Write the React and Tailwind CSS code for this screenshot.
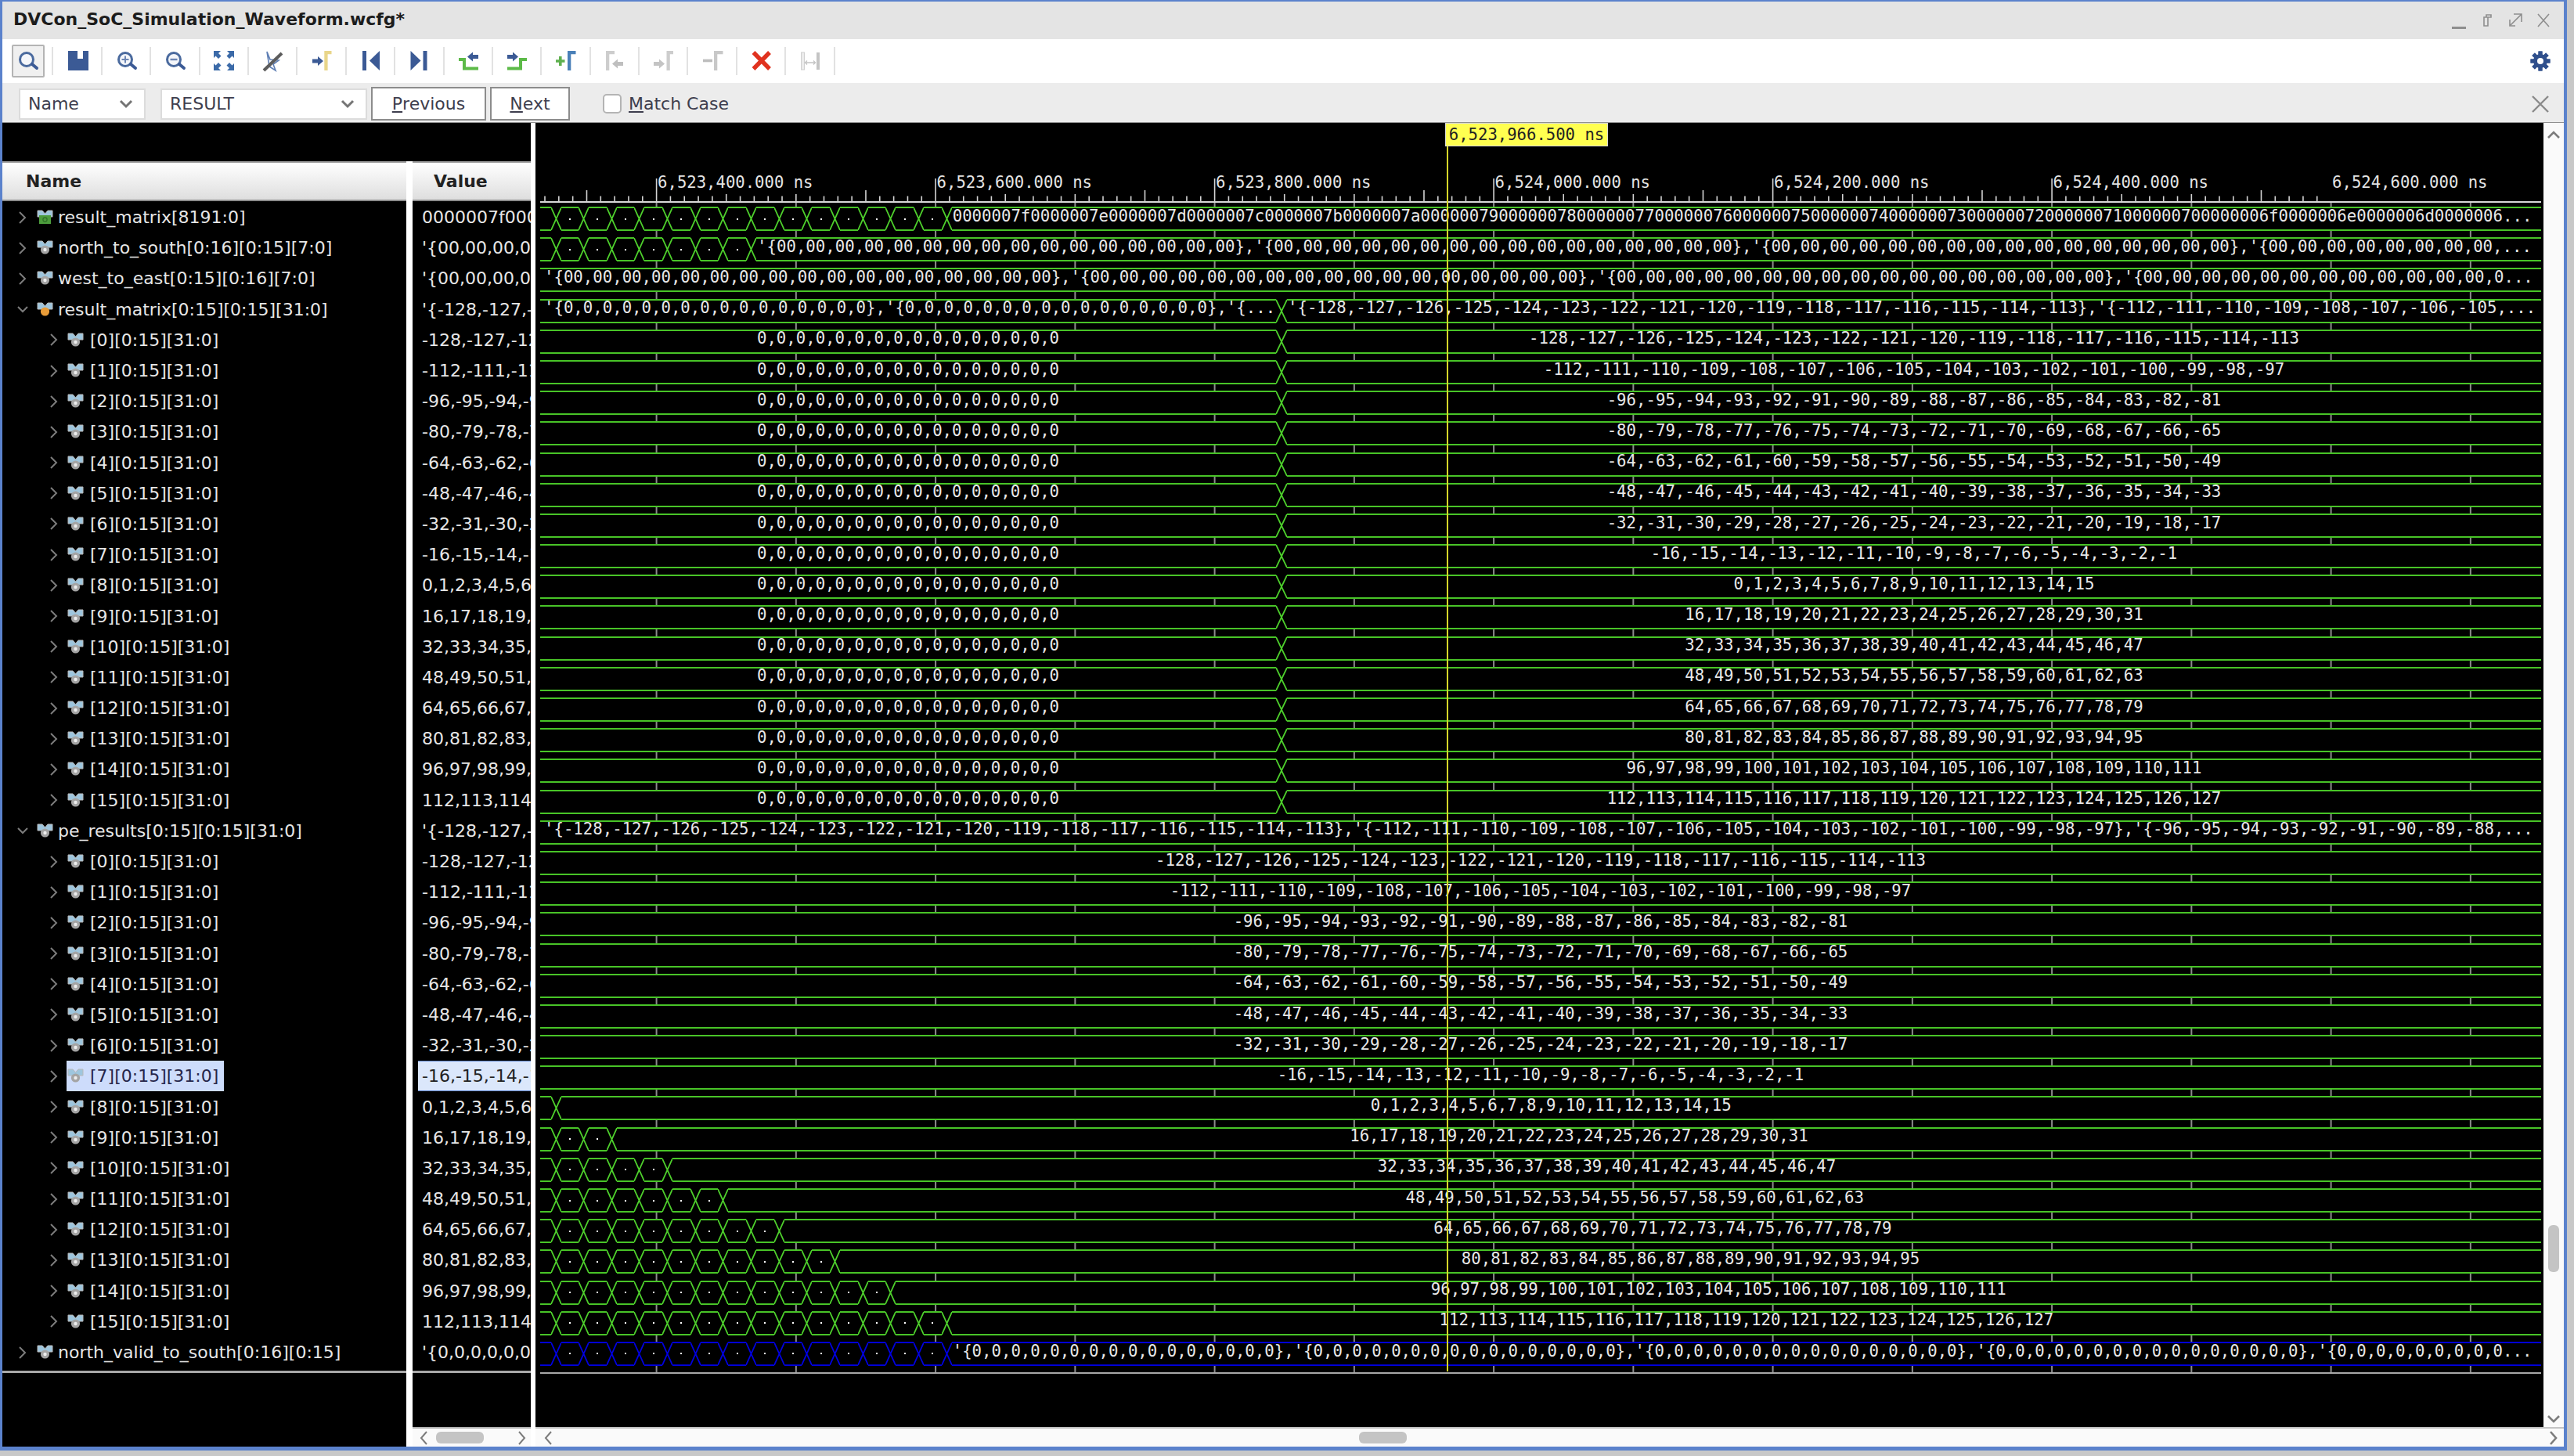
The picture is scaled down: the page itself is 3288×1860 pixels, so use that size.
const range = (from, to) => {
  const out = [];
  for (let i = from; i <= to; i++) out.push(i);
  return out;
};

const vals = (i) => range(-128 + 16 * i, -113 + 16 * i).join(",");
const zeros = range(1, 16).map(() => "0").join(",");
const hex16 = range(1, 16).map(() => "00").join(",");
const hex17 = range(1, 17).map(() => "00").join(",");

const hexTail = range(0, 18).map((n) => "000000" + (0x7f - n).toString(16)).join("") + "0000006...";
const northText = `'{${hex16}},'{${hex16}},'{${hex16}},'{00,00,00,00,00,00,00,00,...`;
const westText = `'{${hex17}},'{${hex17}},'{${hex17}},'{00,00,00,00,00,00,00,00,00,00,00,00,0...`;
const matLeft = `'{${zeros}},'{${zeros}},'{...`;
const matRight = `'{${vals(0)}},'{${vals(1)}}`.slice(0, 125) + "...";
const peText = `'{${vals(0)}},'{${vals(1)}},'{-96,-95,-94,-93,-92,-91,-90,-89,-88,...`;
const validText = `'{${zeros}},'{${zeros}},'{${zeros}},'{${zeros}},'{0,0,0,0,0,0,0,0,0...`;

const treeRows = [
  { name: "result_matrix[8191:0]", value: "0000007f0000007e", icon: "green" },
  { name: "north_to_south[0:16][0:15][7:0]", value: `'{00,00,00,00,00` },
  { name: "west_to_east[0:15][0:16][7:0]", value: `'{00,00,00,00,00` },
  { name: "result_matrix[0:15][0:15][31:0]", value: `'{-128,-127,-126`, icon: "orange", open: true },
  ...range(0, 15).map((i) => ({ name: `[${i}][0:15][31:0]`, value: vals(i), child: true })),
  { name: "pe_results[0:15][0:15][31:0]", value: `'{-128,-127,-126`, open: true },
  ...range(0, 15).map((i) => ({ name: `[${i}][0:15][31:0]`, value: vals(i), child: true, selected: i === 7 })),
  { name: "north_valid_to_south[0:16][0:15]", value: `'{0,0,0,0,0,0,0,0` },
];

const waveRows = [
  { n: 15, text: hexTail, pad: "pl-[1px]" },
  { n: 8, text: northText, pad: "pl-[1px]" },
  { n: 0, text: westText, pad: "pl-[5px]" },
  { split: true, left: matLeft, right: matRight },
  ...range(0, 15).map((i) => ({ split: true, left: zeros, right: vals(i), center: true })),
  { n: 0, text: peText, pad: "pl-[5px]" },
  ...range(0, 7).map((i) => ({ n: 0, text: vals(i), center: true })),
  ...range(8, 15).map((i) => ({ n: (i - 8) * 2 + 1, text: vals(i), center: true })),
  { n: 15, text: validText, blue: true, pad: "pl-[1px]" },
];

const Chevron = ({ open, className = "" }) => (
  <svg width="14" height="16" viewBox="0 0 14 16" className={className}>
    <path
      d={open ? "M1 5 L7 11 L13 5" : "M3 1 L10 8 L3 15"}
      fill="none"
      stroke="#7c7c7c"
      strokeWidth="2"
    />
  </svg>
);

const SignalIcon = ({ kind }) => (
  <svg width="21" height="19" viewBox="0 0 21 19" className="shrink-0">
    <path d="M1 1 L7 1 L10.5 5 L14 1 L20 1 L20 9 L15 9 L10.5 13 L6 9 L1 9 Z" fill="#9ec6de" stroke="#b9b9b9" />
    {kind === "green" ? (
      <>
        <rect x="3" y="7" width="15" height="11" fill="#4c9c3c" />
        <circle cx="10.5" cy="12.5" r="2.6" fill="none" stroke="#2f6e28" strokeWidth="1.2" />
      </>
    ) : kind === "orange" ? (
      <circle cx="10.5" cy="12" r="5.6" fill="#e89c38" />
    ) : (
      <>
        <circle cx="10.5" cy="12" r="5.6" fill="#a4a4a4" />
        <circle cx="10.5" cy="12" r="2.2" fill="#ececec" />
      </>
    )}
  </svg>
);

const TreeRow = ({ row }) => (
  <div className={`h-[39.2px] flex items-center shrink-0 ${row.child ? "pl-[59px]" : "pl-[19px]"}`}>
    <Chevron open={row.open} className="shrink-0" />
    <div
      className={`flex items-center h-[39px] ${row.child ? "ml-[9px] pl-[1px] w-[201px]" : "ml-[11px]"} ${
        row.selected ? "bg-[#cddcfb] text-[#26264a]" : "text-[#e6e6e6]"
      }`}
    >
      <SignalIcon kind={row.icon} />
      <span className={`whitespace-pre text-[22px] ${row.child ? "ml-[8px]" : "ml-[6px]"}`}>{row.name}</span>
    </div>
  </div>
);

const ValueRow = ({ row }) => (
  <div
    className={`h-[39.2px] shrink-0 flex items-center overflow-hidden whitespace-pre text-[22px] ${
      row.selected
        ? "ml-[7px] pl-[5px] bg-[#dbe7fb] text-[#222] border-y border-[#5b82cc]"
        : "pl-[12px] text-[#e6e6e6]"
    }`}
  >
    {row.value}
  </div>
);

const Cross = ({ color, w = 13 }) => (
  <svg width={w} height="31" viewBox={`0 0 ${w} 31`} className="shrink-0 block">
    <rect width={w} height="31" fill="#000" />
    <path d={`M0 1 L${w} 30 M0 30 L${w} 1`} stroke={color} strokeWidth="1.8" fill="none" />
  </svg>
);

const Seg = ({ blue, className = "", children }) => (
  <div
    className={`h-[31px] bg-black border-y-2 flex items-center overflow-hidden whitespace-pre ${
      blue ? "border-[#0000d6]" : "border-[#48c427]"
    } ${className}`}
  >
    {children}
  </div>
);

const WaveText = ({ children }) => (
  <span className="block -mt-[7px] font-['DejaVu_Sans_Mono',monospace] text-[20.7px] leading-none text-[#e8e8e8]">
    {children}
  </span>
);

const WaveRow = ({ row }) => {
  const color = row.blue ? "#0000e0" : "#4ed02c";
  let body;
  if (row.split) {
    body = (
      <>
        <Seg className={`w-[940px] shrink-0 ${row.center ? "justify-center" : "pl-[5px]"}`}>
          <WaveText>{row.left}</WaveText>
        </Seg>
        <Cross color={color} w={14} />
        <Seg className={`flex-1 min-w-0 ${row.center ? "justify-center" : "pl-[1px]"}`}>
          <WaveText>{row.right}</WaveText>
        </Seg>
      </>
    );
  } else {
    const parts = [];
    for (let i = 0; i < row.n; i++) {
      if (i === 0) {
        parts.push(<Seg key="first" blue={row.blue} className="w-[13.5px] shrink-0" />);
      } else {
        parts.push(
          <Seg key={`s${i}`} blue={row.blue} className="w-[22.67px] shrink-0 justify-center">
            <div className="w-[2px] h-[2px] bg-white" />
          </Seg>
        );
      }
      parts.push(<Cross key={`x${i}`} color={color} />);
    }
    body = (
      <>
        {parts}
        <Seg blue={row.blue} className={`flex-1 min-w-0 ${row.center ? "justify-center" : row.pad || ""}`}>
          <WaveText>{row.text}</WaveText>
        </Seg>
      </>
    );
  }
  return <div className="h-[39.2px] shrink-0 flex items-start relative">{body}</div>;
};

const MAJOR = [6523400, 6523600, 6523800, 6524000, 6524200, 6524400, 6524600];
const formatTime = (t) => {
  const s = String(t);
  return `${s[0]},${s.slice(1, 4)},${s.slice(4)}.000 ns`;
};

// ruler svg starts at y=215, x=684
const Ruler = () => {
  const ticks = [];
  for (let k = -8; k <= 119; k++) {
    const x = 154.6 + k * 17.825;
    const idx = ((k % 20) + 20) % 20;
    let top = 35.5;
    if (idx === 0) top = 13;
    else if (idx === 15) top = 28;
    else if (idx === 5 || idx === 10) top = 33;
    ticks.push(<line key={k} x1={x} x2={x} y1={top} y2={43} stroke="#d4d4d4" strokeWidth="1.6" />);
  }
  return (
    <svg width="2565" height="49" className="block shrink-0">
      <rect x="6" y="42" width="2556" height="2" fill="#d8d8d8" />
      {ticks}
      {MAJOR.map((t, i) => (
        <text
          key={t}
          x={154.6 + i * 356.5 + 1.5}
          y="25"
          fill="#e4e4e4"
          className="font-['DejaVu_Sans_Mono',monospace] text-[20.6px]"
        >
          {formatTime(t)}
        </text>
      ))}
    </svg>
  );
};

const GridLines = () => (
  <svg width="2565" height="1666" className="absolute left-0 top-0">
    {range(0, 14).map((k) => {
      const x = 154.6 + k * 178.25;
      return <line key={k} x1={x} x2={x} y1="101" y2="1596" stroke="#8c8c8c" strokeWidth="2" />;
    })}
  </svg>
);

/* ── toolbar icons ── */
const NAVY = "#3b5a95";
const Ico = ({ children }) => (
  <svg width="36" height="36" viewBox="0 0 36 36">
    {children}
  </svg>
);

const Lens = ({ children, cx = 16 }) => (
  <>
    <circle cx={cx} cy="16" r="8.5" fill="#f4f6fa" stroke="#4a6a9e" strokeWidth="3" />
    <path d={`M${cx + 7} 22 L${cx + 13} 27`} stroke={NAVY} strokeWidth="4" strokeLinecap="round" />
    {children}
  </>
);

const arrowR = (x, y, fill) => (
  <path d={`M${x} ${y - 2.5} H${x + 7} V${y - 6} L${x + 14} ${y} L${x + 7} ${y + 6} V${y + 2.5} H${x} Z`} fill={fill} />
);
const arrowL = (x, y, fill) => (
  <path d={`M${x + 14} ${y - 2.5} H${x + 7} V${y - 6} L${x} ${y} L${x + 7} ${y + 6} V${y + 2.5} H${x + 14} Z`} fill={fill} />
);
const gamma = (x, to, fill) => <path d={`M${x} 30 V5 H${to} V9.2 H${x + 4.3} V30 Z`} fill={fill} />;

const toolIcons = [
  <Ico key="search"><Lens /></Ico>,
  <Ico key="save">
    <path d="M6 5 H18 V15 H25 V5 H32 V30 H6 Z" fill={NAVY} />
  </Ico>,
  <Ico key="zin">
    <Lens cx={17}>
      <path d="M12.5 16 H21.5 M17 11.5 V20.5" stroke="#6d86b4" strokeWidth="2" />
    </Lens>
  </Ico>,
  <Ico key="zout">
    <Lens cx={17}>
      <path d="M12.5 16 H21.5" stroke="#6d86b4" strokeWidth="2.4" />
    </Lens>
  </Ico>,
  <Ico key="fit">
    <g fill="#3b6aa8">
      <path d="M5 5 H14 L11 8 L14.5 11.5 L11 15 L7.5 11.5 L5 14 Z" />
      <path d="M31 5 H22 L25 8 L21.5 11.5 L25 15 L28.5 11.5 L31 14 Z" />
      <path d="M5 30 H14 L11 27 L14.5 23.5 L11 20 L7.5 23.5 L5 21 Z" />
      <path d="M31 30 H22 L25 27 L21.5 23.5 L25 20 L28.5 23.5 L31 21 Z" />
    </g>
  </Ico>,
  <Ico key="cursor">
    <path d="M11 6 L15 16 L26 17 L19 22 L22 30 L14 25 Z" fill="#f4f7fc" stroke="#5f7fb4" strokeWidth="1.6" />
    <path d="M7 30 L30 8" stroke="#5c5c5c" strokeWidth="4" />
  </Ico>,
  <Ico key="tomark">
    {arrowR(6, 18, NAVY)}
    {gamma(21.3, 30.5, "#e9d68a")}
  </Ico>,
  <Ico key="first">
    <rect x="8" y="5" width="5" height="25" fill={NAVY} />
    <path d="M30 5 V30 L17 17.5 Z" fill={NAVY} />
  </Ico>,
  <Ico key="last">
    <rect x="23.5" y="5" width="5" height="25" fill={NAVY} />
    <path d="M7.5 5 V30 L20.5 17.5 Z" fill={NAVY} />
  </Ico>,
  <Ico key="prevt">
    {arrowL(17, 12.5, NAVY)}
    <path d="M6 16 H13 V27.5 H31" fill="none" stroke="#5cba48" strokeWidth="4" />
  </Ico>,
  <Ico key="nextt">
    {arrowR(6, 12.5, NAVY)}
    <path d="M6 27.5 H23 V16 H31" fill="none" stroke="#5cba48" strokeWidth="4" />
  </Ico>,
  <Ico key="addm">
    <path d="M6 18 H17.5 M11.8 12 V24" stroke="#5fb04f" strokeWidth="3.6" />
    {gamma(21, 31.5, "#4a80b8")}
  </Ico>,
  <Ico key="prevm">
    {gamma(7, 18, "#cdcdcd")}
    {arrowL(15, 21.5, "#bfbfbf")}
  </Ico>,
  <Ico key="nextm">
    {arrowR(6, 21.5, "#c4c4c4")}
    {gamma(22.5, 31, "#cdcdcd")}
  </Ico>,
  <Ico key="delm">
    <path d="M6 17.5 H18" stroke="#bdbdbd" strokeWidth="3.6" />
    {gamma(20, 31.5, "#c8c8c8")}
  </Ico>,
  <Ico key="delall">
    <path d="M8.5 7 L29 28 M29 7 L8.5 28" stroke="#e0321f" strokeWidth="5.4" />
  </Ico>,
  <Ico key="dist">
    <rect x="7.5" y="7" width="4" height="22" fill="#ececec" stroke="#cfcfcf" />
    <rect x="27" y="7" width="4" height="22" fill="#c4c4c4" />
    <path d="M12 20 H26 M15 17.5 L12.5 20 L15 22.5 M23 17.5 L25.5 20 L23 22.5" stroke="#c4c4c4" strokeWidth="1.3" fill="none" />
  </Ico>,
];

const Gear = () => (
  <svg width="26" height="26" viewBox="0 0 26 26">
    {range(0, 7).map((i) => (
      <rect key={i} x="10.5" y="0.5" width="5" height="25" fill="#2f4f8c" transform={`rotate(${i * 45} 13 13)`} />
    ))}
    <circle cx="13" cy="13" r="9" fill="#2f4f8c" />
    <circle cx="13" cy="13" r="4" fill="#fff" />
  </svg>
);

const Combo = ({ label, className }) => (
  <div className={`h-[40px] bg-white border-2 border-[#dcdcdc] flex items-center justify-between pl-[10px] pr-[14px] ${className}`}>
    <span>{label}</span>
    <svg width="18" height="12" viewBox="0 0 18 12">
      <path d="M2 2 L9 9 L16 2" fill="none" stroke="#757575" strokeWidth="3" />
    </svg>
  </div>
);

const Btn = ({ first, rest, className }) => (
  <div className={`h-[43px] bg-white border-2 border-[#8c8c8c] flex items-center justify-center ${className}`}>
    <span className="underline underline-offset-2">{first}</span>
    {rest}
  </div>
);

const WinIcon = ({ d }) => (
  <svg width="22" height="22" viewBox="0 0 22 22">
    <path d={d} fill="none" stroke="#8e8e8e" strokeWidth="1.6" />
  </svg>
);

const App = () => {
  return (
    <div className="w-[3288px] h-[1860px] bg-[#c8c8c8] overflow-hidden font-['DejaVu_Sans',sans-serif]">
      <div className="w-[3279px] h-[1853px] border-l-[3px] border-t-[2px] border-r-[4px] border-b-[5px] border-[#5b82cc] flex flex-col bg-white">
        {/* ── Title bar ── */}
        <div className="h-[48px] shrink-0 bg-[#e4e4e4] flex items-center justify-between pl-[14px] pr-[15px]">
          <span className="font-bold text-[22px] text-[#1c1c1c] -mt-[4px]">DVCon_SoC_Simulation_Waveform.wcfg*</span>
          <div className="flex items-center gap-[14px]">
            <div className="w-[20px] h-[22px] flex items-end"><div className="w-[18px] h-[3px] bg-[#8e8e8e]" /></div>
            <WinIcon d="M7 7 H16 V4 H10 V7 M7 7 H12 V18 H7 Z" />
            <WinIcon d="M9 3 H19 V13 M19 3 L5 17 M4 10 V18 H11" />
            <WinIcon d="M4 3 L18 19 M18 3 L4 19" />
          </div>
        </div>

        {/* ── Toolbar ── */}
        <div className="h-[56px] shrink-0 bg-white flex items-center pl-[3px] pr-[17px]">
          {toolIcons.map((icon, i) => (
            <div key={i} className="w-[62.4px] h-full flex items-center shrink-0">
              <div className="flex-1 flex items-center justify-center">
                <div
                  className={`w-[42px] h-[42px] flex items-center justify-center rounded-[2px] ${
                    i === 0 ? "bg-[#f0f0f0] border-2 border-[#b4b4b4]" : ""
                  }`}
                >
                  {icon}
                </div>
              </div>
              <div className="w-[2px] h-[36px] bg-[#e2e2e2]" />
            </div>
          ))}
          <div className="ml-auto flex"><Gear /></div>
        </div>

        {/* ── Search bar ── */}
        <div className="h-[51px] shrink-0 bg-[#ececec] border-b border-[#909090] flex items-center pt-[3px] pl-[21px] pr-[18px] text-[22px] text-[#3e3e4e]">
          <Combo label="Name" className="w-[162px]" />
          <Combo label="RESULT" className="w-[264px] ml-[19px]" />
          <Btn first="P" rest="revious" className="w-[147px] ml-[5px]" />
          <Btn first="N" rest="ext" className="w-[102px] ml-[5px]" />
          <div className="w-[24px] h-[25px] ml-[42px] bg-white border-2 border-[#b4b4b4] rounded-[5px]" />
          <span className="ml-[9px]"><span className="underline underline-offset-2">M</span>atch Case</span>
          <svg width="24" height="24" viewBox="0 0 24 24" className="ml-auto">
            <path d="M2 2 L22 22 M22 2 L2 22" stroke="#8a8a8a" strokeWidth="2.4" />
          </svg>
        </div>

        {/* ── Main panes ── */}
        <div className="flex-1 min-h-0 flex">
          <div className="w-[675px] shrink-0 flex flex-col bg-black">
            <div className="h-[49px] shrink-0" />
            <div className="flex-1 min-h-0 flex">
              {/* Name column */}
              <div className="w-[516px] shrink-0 flex flex-col">
                <div className="h-[51px] shrink-0 mb-[1px] border-t-2 border-b-2 border-t-[#a0a0a0] border-b-[#8c8c8c] bg-gradient-to-b from-white to-[#dedede] flex items-center pl-[30px] font-bold text-[22px] text-[#222]">
                  Name
                </div>
                {treeRows.map((row, i) => (
                  <TreeRow key={i} row={row} />
                ))}
                <div className="h-[3px] shrink-0 mt-[4px] bg-[#a8a8a8]" />
              </div>
              <div className="w-[8px] shrink-0 bg-white" />
              {/* Value column */}
              <div className="flex-1 min-w-0 flex flex-col">
                <div className="h-[51px] shrink-0 mb-[1px] border-t-2 border-b-2 border-t-[#a0a0a0] border-b-[#8c8c8c] bg-gradient-to-b from-white to-[#dedede] flex items-center pl-[27px] font-bold text-[22px] text-[#222]">
                  Value
                </div>
                {treeRows.map((row, i) => (
                  <ValueRow key={i} row={row} />
                ))}
                <div className="h-[3px] shrink-0 mt-[4px] bg-[#a8a8a8]" />
                <div className="mt-auto h-[25px] shrink-0 bg-[#fafafa] border-t-2 border-[#b4b4b4] flex items-center pl-[8px] pr-[5px]">
                  <svg width="12" height="18" viewBox="0 0 12 18"><path d="M10 1 L3 9 L10 17" fill="none" stroke="#7c7c7c" strokeWidth="2" /></svg>
                  <div className="w-[61px] h-[15px] ml-[10px] bg-[#c4c4c4] rounded-[6px]" />
                  <svg width="12" height="18" viewBox="0 0 12 18" className="ml-auto"><path d="M2 1 L9 9 L2 17" fill="none" stroke="#7c7c7c" strokeWidth="2" /></svg>
                </div>
              </div>
            </div>
          </div>
          <div className="w-[6px] shrink-0 bg-white" />

          {/* Wave column */}
          <div className="flex-1 min-w-0 flex flex-col">
            <div className="flex-1 min-h-0 flex">
              <div className="w-[2565px] shrink-0 bg-black relative flex flex-col overflow-hidden">
                <GridLines />
                <div className="h-[58px] shrink-0" />
                <div className="relative"><Ruler /></div>
                <div className="pl-[6px] pr-[3px] flex flex-col relative">
                  {waveRows.map((row, i) => (
                    <WaveRow key={i} row={row} />
                  ))}
                  <div className="h-[2px] shrink-0 bg-[#a8a8a8]" />
                </div>
                {/* Cursor + its time label */}
                <div className="absolute left-[1164px] top-[30px] h-[1565px] w-[2px] bg-[#d6d62a]" />
                <div className="absolute left-[1162px] top-0 w-[208px] h-[30px] bg-[#ffff50] border border-[#d8d8d8] flex items-center justify-center font-['DejaVu_Sans_Mono',monospace] text-[20.6px] text-[#222]">
                  6,523,966.500 ns
                </div>
              </div>
              {/* Vertical scrollbar */}
              <div className="flex-1 bg-[#fafafa] flex flex-col items-center pt-[9px]">
                <svg width="18" height="12" viewBox="0 0 18 12"><path d="M2 10 L9 3 L16 10" fill="none" stroke="#7c7c7c" strokeWidth="2.6" /></svg>
                <div className="w-[14px] h-[60px] mt-[1387px] bg-[#c4c4c4] rounded-[6px]" />
                <svg width="18" height="12" viewBox="0 0 18 12" className="mt-[182px]"><path d="M2 2 L9 9 L16 2" fill="none" stroke="#7c7c7c" strokeWidth="2.6" /></svg>
              </div>
            </div>
            {/* Horizontal scrollbar */}
            <div className="h-[25px] shrink-0 bg-[#fafafa] border-t-2 border-[#c4c4c4] flex items-center pl-[10px] pr-[7px]">
              <svg width="12" height="18" viewBox="0 0 12 18"><path d="M10 1 L3 9 L10 17" fill="none" stroke="#7c7c7c" strokeWidth="2" /></svg>
              <div className="w-[61px] h-[15px] ml-[1030px] bg-[#c4c4c4] rounded-[6px]" />
              <svg width="12" height="18" viewBox="0 0 12 18" className="ml-auto"><path d="M2 1 L9 9 L2 17" fill="none" stroke="#7c7c7c" strokeWidth="2.6" /></svg>
            </div>
          </div>
        </div>
      </div>
    </div>
  );
};

export default App;
